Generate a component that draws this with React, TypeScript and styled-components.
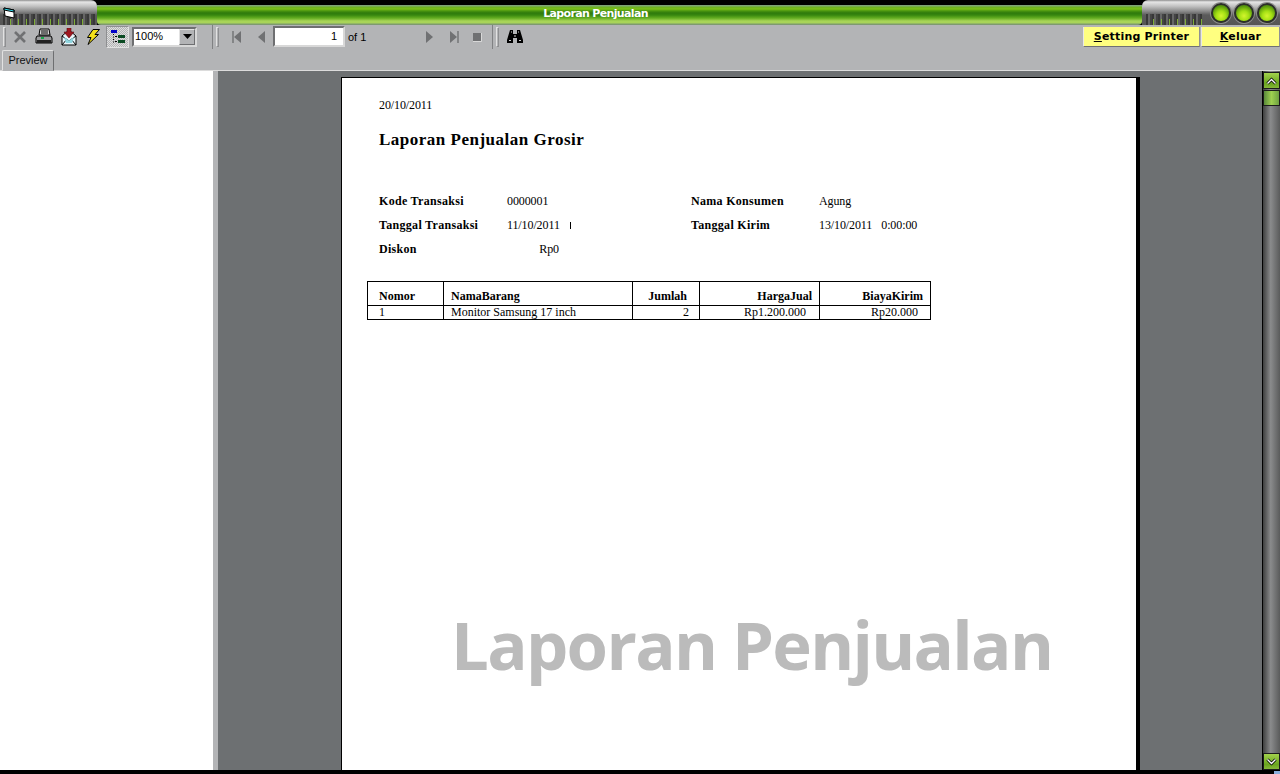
import React from "react";
import styled, { createGlobalStyle } from "styled-components";

const GlobalStyle = createGlobalStyle`
  html, body {
    margin: 0;
    padding: 0;
    background: #000;
    overflow: hidden;
  }
`;

const Window = styled.div`
  width: 1280px;
  height: 774px;
  display: flex;
  flex-direction: column;
  background: #000;
  overflow: hidden;
`;

const TitleBar = styled.div`
  height: 25px;
  display: flex;
  background: #000;
`;
const Cap = styled.div<{ $width: number; $left?: boolean }>`
  width: ${(p) => p.$width}px;
  flex-shrink: 0;
  position: relative;
  border-radius: ${(p) => (p.$left ? "0 6px 0 0" : "6px 0 0 0")};
  background: linear-gradient(#8f8f8f 0, #e6e6e6 2px, #c4c4c4 6px, #8d8d8d 11px, #5a5a5a 15px, #555 25px);
`;
const Teeth = styled.div<{ $left: number; $width: number }>`
  position: absolute;
  left: ${(p) => p.$left}px;
  width: ${(p) => p.$width}px;
  top: 14px;
  height: 11px;
  background:
    repeating-linear-gradient(90deg, transparent 0 7px, #7fae38 7px 8px) 0 100% / 100% 6px no-repeat,
    repeating-linear-gradient(90deg, #383838 0 2px, #666 2px 4px, #444 4px 6px);
`;
const WindowIcon = styled.svg`
  position: absolute;
  left: 3px;
  top: 7px;
`;
const GreenBar = styled.div`
  flex: 1;
  margin-top: 5px;
  padding: 0 48px 3px 0;
  border-radius: 0 0 4px 4px;
  display: flex;
  align-items: center;
  justify-content: center;
  color: #fff;
  font: bold 11px "DejaVu Sans", sans-serif;
  letter-spacing: -0.65px;
  background: linear-gradient(
    #7f9f72 0,
    #7ea878 1px,
    #6cb020 2px,
    #7ac018 4px,
    #4a9410 6px,
    #2f7a0c 8px,
    #37860f 10px,
    #62ac20 13px,
    #a8d458 16px,
    #a8d458 18px,
    #7e9a70 19px
  );
`;
const Lights = styled.div`
  position: absolute;
  left: 69px;
  top: 3px;
  display: flex;
  gap: 3px;
`;
const Light = styled.div`
  width: 20px;
  height: 20px;
  box-sizing: border-box;
  border-radius: 50%;
  border: 2px solid #2c2f2a;
  box-shadow: 0 0 0 1px #8b8b8b;
  background: radial-gradient(circle at 50% 68%, #d4f52e 0, #a4e014 35%, #5c9c0c 70%, #3a6a10 100%);
`;

const Tools = styled.div`
  height: 45px;
  background: #b3b4b6;
  border-bottom: 1px solid #dcdcdc;
  box-sizing: content-box;
  display: flex;
  flex-direction: column;
`;
const ToolRow = styled.div`
  height: 23px;
  margin-bottom: 2px;
  display: flex;
  align-items: center;
  padding-left: 3px;
  font: 11px "Liberation Sans", sans-serif;
  color: #000;
`;
const Grip = styled.div<{ $lead?: boolean }>`
  width: 3px;
  height: 20px;
  margin-left: ${(p) => (p.$lead ? 3 : 0)}px;
  box-sizing: border-box;
  border: 1px solid #8e8f91;
  border-left-color: #e2e2e2;
  border-top-color: #e2e2e2;
`;
const Divider = styled.div`
  width: 1px;
  height: 24px;
  background: #808183;
`;
const Tool = styled.div<{ $width?: number }>`
  width: ${(p) => p.$width ?? 24}px;
  height: 22px;
  flex-shrink: 0;
  display: flex;
  align-items: center;
  justify-content: center;
`;
const LeadGap = styled.div`
  width: 2px;
`;
const ToggleTool = styled(Tool)`
  width: 23px;
  height: 22px;
  margin-left: 1px;
  box-sizing: border-box;
  border: 1px solid;
  border-color: #8e8f91 #e2e2e2 #e2e2e2 #8e8f91;
  background: repeating-conic-gradient(#b3b4b6 0 25%, #dedede 0 50%) 0 0 / 2px 2px;
`;
const Combo = styled.div`
  width: 65px;
  height: 20px;
  margin-left: 3px;
  box-sizing: border-box;
  border: 2px solid;
  border-color: #6e6f71 #d8d8d8 #d8d8d8 #6e6f71;
  background: #fff;
  display: flex;
  font: 11px "Liberation Sans", sans-serif;
  line-height: 15px;
  padding-left: 1px;
`;
const ComboText = styled.span`
  flex: 1;
`;
const ComboButton = styled.div`
  width: 16px;
  background: #b3b4b6;
  border: 1px solid;
  border-color: #e2e2e2 #6e6f71 #6e6f71 #e2e2e2;
  box-sizing: border-box;
  display: flex;
  align-items: center;
  justify-content: center;
`;
const PageInput = styled.div`
  width: 72px;
  height: 21px;
  margin-left: -1px;
  box-sizing: border-box;
  padding-right: 6px;
  border: 2px solid;
  border-color: #6e6f71 #d8d8d8 #d8d8d8 #6e6f71;
  background: #fff;
  text-align: right;
  line-height: 16px;
`;
const PageCount = styled.span`
  width: 72px;
  padding-left: 3px;
  box-sizing: border-box;
`;
const Spacer = styled.div`
  flex: 1;
`;
const YellowButton = styled.div<{ $width: number; $gap: number }>`
  width: ${(p) => p.$width}px;
  height: 20px;
  margin-left: ${(p) => p.$gap}px;
  margin-top: 1px;
  box-sizing: border-box;
  flex-shrink: 0;
  background: #ffff80;
  border-bottom: 1px solid #707173;
  border-right: 1px solid #909193;
  border-left: 1px solid #e8e8e8;
  text-align: center;
  font: bold 11px "DejaVu Sans", sans-serif;
  line-height: 19px;
  letter-spacing: 0.2px;
  color: #000;
  u {
    text-decoration-thickness: 1px;
    text-underline-offset: 1px;
  }
`;
const TabRow = styled.div`
  height: 20px;
  padding-left: 2px;
  display: flex;
`;
const Tab = styled.div`
  width: 52px;
  height: 21px;
  box-sizing: border-box;
  border: 1px solid;
  border-color: #e2e2e2 #6e6f71 #b3b4b6 #e2e2e2;
  border-radius: 2px 2px 0 0;
  background: #b3b4b6;
  text-align: center;
  font: 11px "Liberation Sans", sans-serif;
  line-height: 19px;
  color: #111;
`;

const Main = styled.div`
  height: 699px;
  display: flex;
`;
const TreePanel = styled.div`
  width: 213px;
  background: #fff;
  flex-shrink: 0;
`;
const Splitter = styled.div`
  width: 5px;
  background: #b3b4b6;
  flex-shrink: 0;
`;
const Viewer = styled.div`
  flex: 1;
  background: #6d7072;
  padding: 6px 0 0 123px;
  height: 699px;
  box-sizing: border-box;
  overflow: hidden;
`;
const Sheet = styled.div`
  width: 796px;
  height: 700px;
  box-sizing: border-box;
  padding: 1px 0 0 37px;
  background: #fff;
  border: 1px solid #000;
  box-shadow: 3px 0 0 #000;
  font: 12px "Liberation Serif", serif;
  color: #000;
`;
const DateLine = styled.div`
  margin-top: 19px;
  line-height: 14px;
  letter-spacing: -0.1px;
`;
const ReportTitle = styled.h1`
  margin: 18px 0 0;
  font: bold 17px/20px "Liberation Serif", serif;
  letter-spacing: 0.5px;
`;
const InfoGrid = styled.div`
  margin-top: 39px;
  display: grid;
  grid-template-columns: 128px 184px 128px 1fr;
  grid-auto-rows: 24px;
  line-height: 24px;
  letter-spacing: -0.1px;
`;
const Label = styled.div`
  font-weight: bold;
  letter-spacing: 0.3px;
`;
const Amount = styled.div`
  width: 52px;
  text-align: right;
`;
const Tick = styled.span`
  display: inline-block;
  width: 1px;
  height: 7px;
  margin-left: 10px;
  background: #000;
`;
const Time = styled.span`
  margin-left: 9px;
`;
const Table = styled.table`
  margin: 20px 0 0 -12px;
  width: 563px;
  border-collapse: collapse;
  table-layout: fixed;
  font-size: 12px;
`;
const Head = styled.th<{ $pad: number; $right?: boolean }>`
  height: 24px;
  padding: 4px ${(p) => (p.$right ? p.$pad : 0)}px 0 ${(p) => (p.$right ? 0 : p.$pad)}px;
  border: 1px solid #000;
  text-align: ${(p) => (p.$right ? "right" : "left")};
  box-sizing: border-box;
  line-height: 14px;
`;
const Cell = styled.td<{ $pad: number; $right?: boolean }>`
  height: 13px;
  padding: 0 ${(p) => (p.$right ? p.$pad : 0)}px 0 ${(p) => (p.$right ? 0 : p.$pad)}px;
  border: 1px solid #000;
  text-align: ${(p) => (p.$right ? "right" : "left")};
  box-sizing: border-box;
  line-height: 13px;
`;
const Watermark = styled.div`
  margin: 279px 0 0 72px;
  font: bold 67px/90px "Open Sans", sans-serif;
  letter-spacing: -1.7px;
  color: #bbbbbb;
  white-space: nowrap;
`;

const ScrollBar = styled.div`
  width: 18px;
  height: 699px;
  box-sizing: border-box;
  padding: 1px 0 0 1px;
  flex-shrink: 0;
  display: flex;
  flex-direction: column;
  border-left: 1px solid #000;
  background: linear-gradient(90deg, #3e3f3f, #8a8b8c 45%, #5a5b5b);
`;
const ScrollArrow = styled.div`
  height: 17px;
  margin-left: -1px;
  box-sizing: border-box;
  border: 1px solid #1c1c1c;
  background: linear-gradient(#a2d24c, #6aa51f 70%, #86b83a);
  display: flex;
  align-items: center;
  justify-content: center;
`;
const ScrollThumb = styled.div`
  height: 16px;
  margin: 1px 0 0 -1px;
  box-sizing: border-box;
  border: 1px solid #1c1c1c;
  background: linear-gradient(90deg, #5a8a3a, #9ed050 50%, #6ea040);
`;
const ScrollFill = styled.div`
  flex: 1;
`;
const BottomEdge = styled.div`
  height: 4px;
  display: flex;
  justify-content: flex-end;
`;
const CornerBit = styled.div`
  width: 6px;
  height: 3px;
  margin-top: 1px;
  background: #8aaedc;
`;

const CloseIcon = () => (
  <svg width="14" height="14" viewBox="0 0 14 14">
    <path d="M2 2l10 10M12 2L2 12" stroke="#707173" strokeWidth="2.6" fill="none" />
  </svg>
);
const PrintIcon = () => (
  <svg width="18" height="18" viewBox="0 0 18 18">
    <path d="M5 1h9l1 6H4z" fill="#d8d8d8" stroke="#000" />
    <path d="M6 3h7M6 5h7" stroke="#000" strokeWidth="1" />
    <path d="M2 8h14l1 2v5H1v-5z" fill="#9a9b9d" stroke="#000" />
    <path d="M2 12h14v3H2z" fill="#222" />
    <rect x="6" y="9" width="3" height="2" fill="#17a84a" />
  </svg>
);
const MailIcon = () => (
  <svg width="16" height="18" viewBox="0 0 16 18">
    <path d="M1 8l7-6 7 6v9H1z" fill="#e8f4f8" stroke="#000" />
    <path d="M1 8l7 5 7-5M1 17l5-6M15 17l-5-6" fill="none" stroke="#000" />
    <path d="M3 9l5 3.5L13 9l-2 6H5z" fill="#8fd6e0" />
    <path d="M6 0h4v4h3l-5 6-5-6h3z" fill="#a01820" stroke="#5a0a10" strokeWidth="0.6" />
  </svg>
);
const BoltIcon = () => (
  <svg width="14" height="16" viewBox="0 0 14 16">
    <path d="M7 0.5h6.5L9 5.5h3.5L2 15.5l3-7H1.5z" fill="#f5e11a" stroke="#000" strokeWidth="1" />
  </svg>
);
const TreeIcon = () => (
  <svg width="14" height="14" viewBox="0 0 14 14">
    <rect x="0" y="0" width="6" height="3" fill="#0000c8" />
    <rect x="7" y="5" width="7" height="3" fill="#0a4a22" />
    <rect x="7" y="10" width="7" height="3" fill="#0a4a22" />
    <path d="M2.5 4v1M2.5 6.5v1M2.5 9v1M2.5 11.5v1M4 6.5h2M4 11.5h2" stroke="#000" />
  </svg>
);
const DownIcon = () => (
  <svg width="9" height="5" viewBox="0 0 9 5">
    <path d="M0 0h9L4.5 5z" fill="#000" />
  </svg>
);
const NavIcon = ({ dir, bar }: { dir: "left" | "right"; bar?: boolean }) => (
  <svg width="12" height="14" viewBox="0 0 12 14">
    {dir === "left" ? (
      <path d="M9 1v12L2 7z" fill="#707173" />
    ) : (
      <path d="M3 1v12l7-6z" fill="#707173" />
    )}
    {bar && (
      <path
        d={dir === "left" ? "M1 1v12" : "M11 1v12"}
        stroke="#707173"
        strokeWidth="1.4"
      />
    )}
  </svg>
);
const StopIcon = () => (
  <svg width="10" height="10" viewBox="0 0 10 10">
    <rect x="1" y="1" width="8" height="8" fill="#707173" />
    <path d="M9.5 1v8.5H1" stroke="#d8d8d8" fill="none" />
  </svg>
);
const BinocularsIcon = () => (
  <svg width="16" height="15" viewBox="0 0 16 15">
    <path d="M3 1h3v4h4V1h3l3 10v3h-6V9H6v5H0v-3z" fill="#000" />
    <path d="M2 11.5h2M12 11.5h2M4 3h1M11 3h1M7 7h2" stroke="#d0d0d0" />
  </svg>
);
const Chevron = ({ down }: { down?: boolean }) => {
  const d = down ? "M1.5 1.5l4 4 4-4" : "M1.5 6.5l4-4 4 4";
  return (
    <svg width="11" height="8" viewBox="0 0 11 8">
      <path d={d} fill="none" stroke="#000" strokeWidth="3" />
      <path d={d} fill="none" stroke="#fff" strokeWidth="1.4" />
    </svg>
  );
};

const App: React.FC = () => {
  return (
    <>
      <GlobalStyle />
      <Window>
        <TitleBar>
          <Cap $width={97} $left>
            <Teeth $left={3} $width={92} />
            <WindowIcon width="13" height="12" viewBox="0 0 13 12">
              <path d="M1 1l10 2v8L2 9z" fill="#fff" stroke="#000" />
              <path d="M1 1l10 2v2L1 3z" fill="#2fd6e8" stroke="#000" />
            </WindowIcon>
          </Cap>
          <GreenBar>Laporan Penjualan</GreenBar>
          <Cap $width={138}>
            <Teeth $left={4} $width={56} />
            <Lights>
              <Light />
              <Light />
              <Light />
            </Lights>
          </Cap>
        </TitleBar>

        <Tools>
          <ToolRow>
            <Grip />
            <LeadGap />
            <Tool><CloseIcon /></Tool>
            <Tool><PrintIcon /></Tool>
            <Tool $width={25}><MailIcon /></Tool>
            <Tool><BoltIcon /></Tool>
            <ToggleTool><TreeIcon /></ToggleTool>
            <Combo>
              <ComboText>100%</ComboText>
              <ComboButton><DownIcon /></ComboButton>
            </Combo>
            <Tool $width={15} />
            <Divider />
            <Grip $lead />
            <Tool $width={7} />
            <Tool><NavIcon dir="left" bar /></Tool>
            <Tool><NavIcon dir="left" /></Tool>
            <PageInput>1</PageInput>
            <PageCount>of 1</PageCount>
            <Tool><NavIcon dir="right" /></Tool>
            <Tool><NavIcon dir="right" bar /></Tool>
            <Tool><StopIcon /></Tool>
            <Tool $width={3} />
            <Divider />
            <Grip $lead />
            <Tool $width={4} />
            <Tool><BinocularsIcon /></Tool>
            <Spacer />
            <YellowButton $width={117} $gap={0}><u>S</u>etting Printer</YellowButton>
            <YellowButton $width={79} $gap={1}><u>K</u>eluar</YellowButton>
          </ToolRow>
          <TabRow>
            <Tab>Preview</Tab>
          </TabRow>
        </Tools>

        <Main>
          <TreePanel />
          <Splitter />
          <Viewer>
            <Sheet>
              <DateLine>20/10/2011</DateLine>
              <ReportTitle>Laporan Penjualan Grosir</ReportTitle>
              <InfoGrid>
                <Label>Kode Transaksi</Label>
                <div>0000001</div>
                <Label>Nama Konsumen</Label>
                <div>Agung</div>
                <Label>Tanggal Transaksi</Label>
                <div>11/10/2011<Tick /></div>
                <Label>Tanggal Kirim</Label>
                <div>13/10/2011<Time>0:00:00</Time></div>
                <Label>Diskon</Label>
                <Amount>Rp0</Amount>
              </InfoGrid>
              <Table>
                <colgroup>
                  <col width="76" />
                  <col width="189" />
                  <col width="67" />
                  <col width="120" />
                  <col width="111" />
                </colgroup>
                <thead>
                  <tr>
                    <Head $pad={11}>Nomor</Head>
                    <Head $pad={7}>NamaBarang</Head>
                    <Head $pad={12} $right>Jumlah</Head>
                    <Head $pad={7} $right>HargaJual</Head>
                    <Head $pad={7} $right>BiayaKirim</Head>
                  </tr>
                </thead>
                <tbody>
                  <tr>
                    <Cell $pad={11}>1</Cell>
                    <Cell $pad={7}>Monitor Samsung 17 inch</Cell>
                    <Cell $pad={10} $right>2</Cell>
                    <Cell $pad={13} $right>Rp1.200.000</Cell>
                    <Cell $pad={12} $right>Rp20.000</Cell>
                  </tr>
                </tbody>
              </Table>
              <Watermark>Laporan Penjualan</Watermark>
            </Sheet>
          </Viewer>
          <ScrollBar>
            <ScrollArrow><Chevron /></ScrollArrow>
            <ScrollThumb />
            <ScrollFill />
            <ScrollArrow><Chevron down /></ScrollArrow>
          </ScrollBar>
        </Main>
        <BottomEdge>
          <CornerBit />
        </BottomEdge>
      </Window>
    </>
  );
};

export default App;
